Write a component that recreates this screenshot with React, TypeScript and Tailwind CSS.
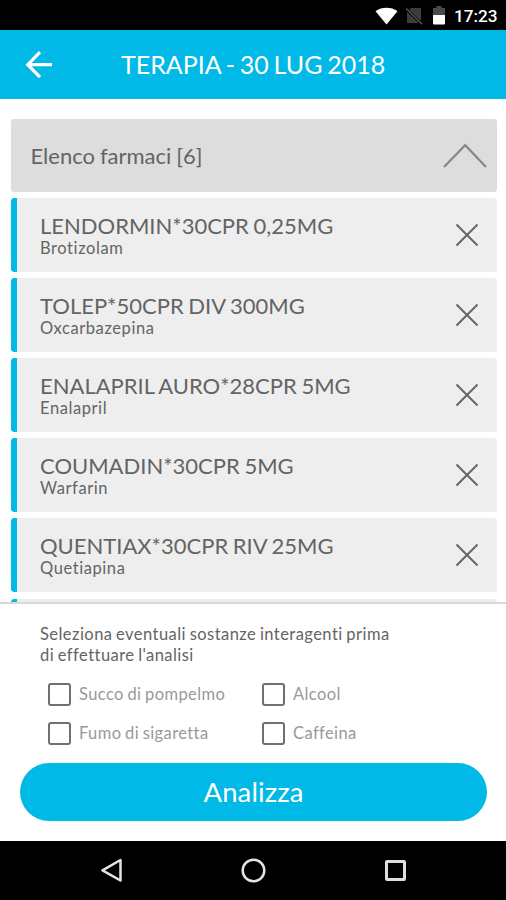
import React from 'react';

const drugs = [
  { name: 'LENDORMIN*30CPR 0,25MG', substance: 'Brotizolam' },
  { name: 'TOLEP*50CPR DIV 300MG', substance: 'Oxcarbazepina' },
  { name: 'ENALAPRIL AURO*28CPR 5MG', substance: 'Enalapril' },
  { name: 'COUMADIN*30CPR 5MG', substance: 'Warfarin' },
  { name: 'QUENTIAX*30CPR RIV 25MG', substance: 'Quetiapina' },
  { name: '', substance: '' },
];

function StatusBar() {
  return (
    <div className="flex h-[29.5px] shrink-0 items-center justify-end bg-black pr-[9px] pt-[2px]">
      <svg className="mr-[8px] h-[18px] w-[23px]" viewBox="0 0 23 18" fill="#fff">
        <path d="M0.5 4.2C6.5-.4 16.500-.4 22.500 4.200L11.500 17.500Z" />
      </svg>
      <svg className="mr-[10px] h-[18px] w-[17px]" viewBox="0 0 17 18">
        <path d="M5 1H15V16H1V5Z" fill="#3d3d3d" />
        <path d="M0 2L16.500 17.500" stroke="#000" strokeWidth="3" />
        <path d="M0 1.500L16 17.200" stroke="#555" strokeWidth="1.500" />
      </svg>
      <svg className="mr-[9px] h-[19px] w-[12px]" viewBox="0 0 12 19">
        <path d="M3.500 0H8.500V2H12V9H0V2H3.500Z" fill="#4a4a4a" />
        <path d="M0 9H12V17.500Q12 18.500 11 18.500H1Q0 18.500 0 17.500Z" fill="#fff" />
      </svg>
      <span className="w-[43px] whitespace-nowrap font-['Roboto',sans-serif] text-[17.200px] font-medium leading-[20px] text-white">17:23</span>
    </div>
  );
}

function DrugRow({ name, substance }: { name: string; substance: string }) {
  return (
    <div className="flex h-[74px] shrink-0 overflow-hidden rounded-[3px] bg-[#eee]">
      <div className="w-[6.500px] shrink-0 rounded-l-[3px] bg-[#00b9e7]" />
      <div className="flex-1 pl-[23px] pt-[14px]">
        <div className="whitespace-nowrap text-[22px] leading-[27px] [word-spacing:-1px]">{name}</div>
        <div className="whitespace-nowrap text-[16.500px] leading-[19px] tracking-[0.580px]">{substance}</div>
      </div>
      <svg className="mr-[17.600px] mt-[25px] h-[24px] w-[24px]" viewBox="0 0 24 24" fill="none" stroke="#666" strokeWidth="2">
        <path d="M1.500 1.500L22.500 22.500M22.500 1.500L1.500 22.500" />
      </svg>
    </div>
  );
}

function Check({ label }: { label: string }) {
  return (
    <label className="flex h-[23px] items-center">
      <span className="h-[23px] w-[23px] shrink-0 rounded-[3px] border-2 border-[#707070] bg-white" />
      <span className="ml-[8px] whitespace-nowrap text-[16.500px] leading-[22px] tracking-[0.40px] text-[#999] [word-spacing:-1px]">{label}</span>
    </label>
  );
}

export default function App() {
  return (
    <div className="flex h-[900px] w-[506px] flex-col overflow-hidden bg-white font-['Lato',sans-serif] text-[#646464]">
      <StatusBar />
      <header className="flex h-[69px] shrink-0 items-center bg-[#00b9e7] text-white">
        <svg className="ml-[25px] h-[28px] w-[28px]" viewBox="0 0 28 28" fill="none" stroke="#fff" strokeWidth="3.200">
          <path d="M27 14.700H2.700M15 2.200L2.700 14.700L15 27.200" />
        </svg>
        <h1 className="ml-[68px] whitespace-nowrap text-[25px] leading-[32px] [word-spacing:-1.600px]">TERAPIA - 30 LUG 2018</h1>
      </header>
      <main className="flex h-[503px] shrink-0 flex-col gap-[6.100px] overflow-hidden pl-[10.500px] pr-[9.500px] pt-[20.300px]">
        <div className="flex h-[73.200px] shrink-0 items-center justify-between rounded-[3px] bg-[#ddd] pl-[20px] pr-[10px]">
          <span className="mt-[2px] whitespace-nowrap text-[22px] leading-[28px] [word-spacing:-0.700px]">Elenco farmaci [6]</span>
          <svg className="mt-px h-[26px] w-[44px]" viewBox="0 0 44 26" fill="none" stroke="#888" strokeWidth="2.200">
            <path d="M1 24L22.200 2.200L43 24" />
          </svg>
        </div>
        {drugs.map((d, i) => (
          <DrugRow key={i} name={d.name} substance={d.substance} />
        ))}
      </main>
      <section className="flex h-[239.500px] shrink-0 flex-col border-t-2 border-[#d8d8d8] bg-white">
        <p className="ml-[40px] mt-[20px] text-[16.500px] leading-[21px] tracking-[0.45px] [word-spacing:-1px]">
          Seleziona eventuali sostanze interagenti prima
          <br />
          di effettuare l'analisi
        </p>
        <div className="ml-[48px] mt-[17px] grid grid-cols-[214px_200px] gap-y-[16.300px]">
          <Check label="Succo di pompelmo" />
          <Check label="Alcool" />
          <Check label="Fumo di sigaretta" />
          <Check label="Caffeina" />
        </div>
        <button className="ml-[20px] mt-[18.200px] h-[58.500px] w-[467px] rounded-full bg-[#00b9e7] text-[27.500px] leading-[32px] tracking-[0.100px] text-white">Analizza</button>
      </section>
      <nav className="flex flex-1 items-center bg-black">
        <svg className="ml-[100px] h-[25px] w-[23px]" viewBox="0 0 23 25" fill="none" stroke="#e4e4e4" strokeWidth="2.500" strokeLinejoin="round">
          <path d="M20.500 2V22.500L2.500 12.300Z" />
        </svg>
        <svg className="ml-[118px] h-[25px] w-[25px]" viewBox="0 0 25 25" fill="none" stroke="#e4e4e4" strokeWidth="2.500">
          <circle cx="12.500" cy="12.500" r="10.800" />
        </svg>
        <span className="ml-[119px] h-[21px] w-[21px] rounded-[2px] border-[3px] border-[#dedede]" />
      </nav>
    </div>
  );
}
